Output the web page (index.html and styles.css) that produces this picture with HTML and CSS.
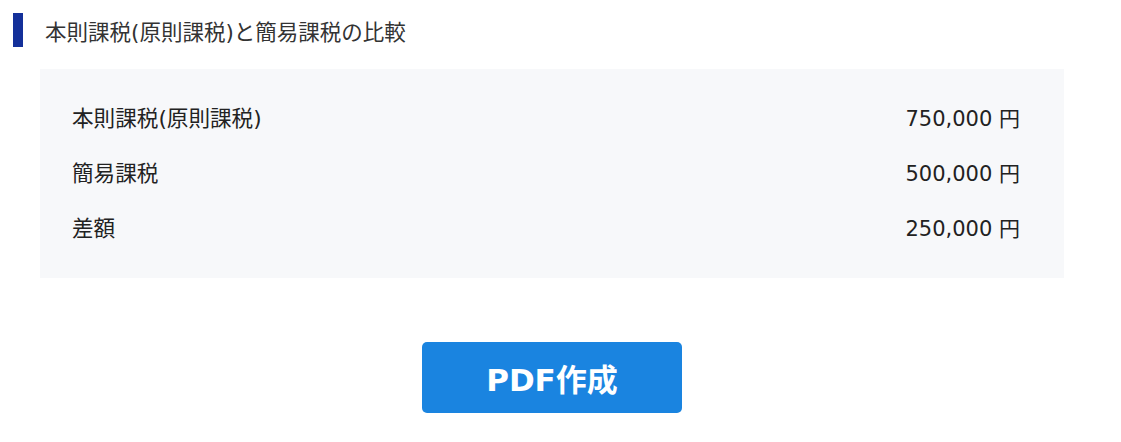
FILE: index.html
```html
<!DOCTYPE html>
<html lang="ja">
<head>
<meta charset="utf-8">
<link rel="stylesheet" href="styles.css">
</head>
<body>
<div class="page">
  <h2 class="section-title">本則課税(原則課税)と簡易課税の比較</h2>
  <div class="panel">
    <div class="row"><span class="label">本則課税(原則課税)</span><span class="value">750,000 円</span></div>
    <div class="row"><span class="label">簡易課税</span><span class="value">500,000 円</span></div>
    <div class="row"><span class="label">差額</span><span class="value">250,000 円</span></div>
  </div>
  <div class="actions">
    <button class="btn">PDF作成</button>
  </div>
</div>
</body>
</html>
```
FILE: styles.css
```css
html, body {
  margin: 0;
  padding: 0;
  background: #ffffff;
}
body {
  font-family: "DejaVu Sans", "Noto Sans CJK JP", sans-serif;
  color: #222222;
}
.page {
  padding: 13px 0 0 13px;
  width: 1051px;
}
.section-title {
  margin: 0;
  display: flex;
  align-items: center;
  gap: 22px;
  height: 34px;
  font-size: 21.5px;
  font-weight: normal;
  color: #333333;
}
.section-title::before {
  content: "";
  width: 10px;
  height: 34px;
  background: #14309a;
}
.panel {
  margin: 22px 0 0 27px;
  background: #f7f8fa;
  padding: 20px 44px 24px 32px;
}
.row {
  height: 55px;
  display: flex;
  align-items: center;
  justify-content: space-between;
  font-size: 21px;
}
.label {
  font-size: 21.6px;
}
.actions {
  display: flex;
  justify-content: center;
  padding-left: 27px;
  margin-top: 64px;
}
.btn {
  width: 260px;
  height: 71px;
  border: none;
  border-radius: 5px;
  background: #1a84e0;
  color: #ffffff;
  font-family: "DejaVu Sans", "Noto Sans CJK JP", sans-serif;
  font-weight: bold;
  font-size: 31px;
}
```
